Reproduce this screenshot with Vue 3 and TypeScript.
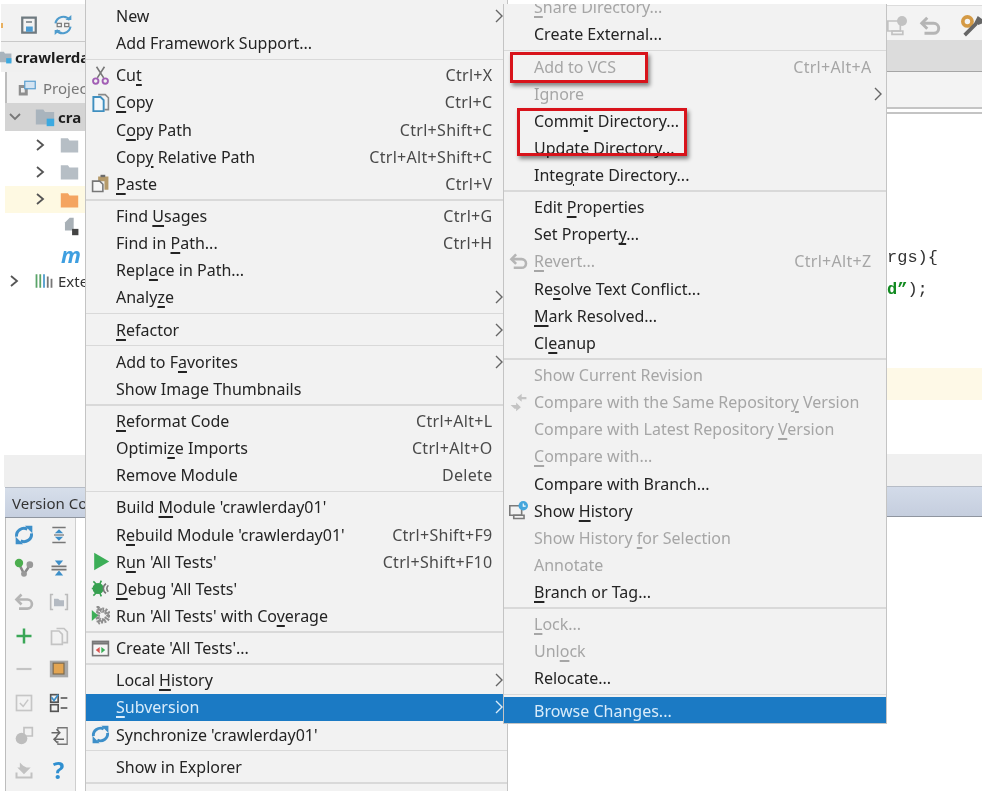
<script setup lang="ts">
interface Item { label?: string; key?: string; icon?: string; dis?: boolean; arrow?: boolean; active?: boolean; sep?: boolean }
const S: Item = { sep: true }
const menu1: Item[] = [
  { label: 'New', arrow: true }, { label: 'Add Framework Support...' }, S,
  { label: 'Cu_t', key: 'Ctrl+X', icon: 'cut' }, { label: '_Copy', key: 'Ctrl+C', icon: 'copy' },
  { label: 'C_opy Path', key: 'Ctrl+Shift+C' }, { label: 'Cop_y Relative Path', key: 'Ctrl+Alt+Shift+C' },
  { label: '_Paste', key: 'Ctrl+V', icon: 'paste' }, S,
  { label: 'Find _Usages', key: 'Ctrl+G' }, { label: 'Find in _Path...', key: 'Ctrl+H' },
  { label: 'Repl_ace in Path...' }, { label: 'Analy_ze', arrow: true }, S,
  { label: '_Refactor', arrow: true }, S,
  { label: 'Add to F_avorites', arrow: true }, { label: 'Show Image Thumbnails' }, S,
  { label: '_Reformat Code', key: 'Ctrl+Alt+L' }, { label: 'Optimi_ze Imports', key: 'Ctrl+Alt+O' },
  { label: 'Remove Module', key: 'Delete' }, S,
  { label: "Build _Module 'crawlerday01'" }, { label: "R_ebuild Module 'crawlerday01'", key: 'Ctrl+Shift+F9' },
  { label: "R_un 'All Tests'", key: 'Ctrl+Shift+F10', icon: 'run' }, { label: "_Debug 'All Tests'", icon: 'bug' },
  { label: "Run 'All Tests' with Co_verage", icon: 'cover' }, S,
  { label: "Create 'All Tests'...", icon: 'create' }, S,
  { label: 'Local _History', arrow: true }, { label: '_Subversion', arrow: true, active: true },
  { label: "Synchronize 'crawlerday01'", icon: 'sync' }, S,
  { label: 'Show in Explorer' }, S,
]
const menu2: Item[] = [
  { label: '_Share Directory...', dis: true }, { label: 'Create External...' }, S,
  { label: 'Add to VCS', key: 'Ctrl+Alt+A', dis: true }, { label: 'Ignore', dis: true, arrow: true },
  { label: 'Comm_it Directory...' }, { label: 'Update Directory...' }, { label: 'Inte_grate Directory...' }, S,
  { label: 'Edit _Properties' }, { label: 'Set Propert_y...' },
  { label: '_Revert...', key: 'Ctrl+Alt+Z', dis: true, icon: 'undo' }, { label: 'Re_solve Text Conflict...' },
  { label: '_Mark Resolved...' }, { label: 'Cl_eanup' }, S,
  { label: 'Show Current Revision', dis: true },
  { label: 'Compare with the Same Repositor_y Version', dis: true, icon: 'compare' },
  { label: 'Compare with Latest Repository _Version', dis: true }, { label: '_Compare with...', dis: true },
  { label: 'Compare with Branch...' }, { label: 'Show _History', icon: 'history' },
  { label: 'Show History _for Selection', dis: true }, { label: 'Annotate', dis: true }, { label: '_Branch or Tag...' }, S,
  { label: '_Lock...', dis: true }, { label: 'Unl_ock', dis: true }, { label: 'Relocate...' }, S,
  { label: 'Browse Changes...', active: true },
]
function parts(label = ''): [string, string, string] {
  const i = label.indexOf('_')
  return i < 0 ? [label, '', ''] : [label.slice(0, i), label[i + 1], label.slice(i + 2)]
}
const tools = ['sync', 'expand', 'branch', 'collapse', 'undo', 'bracket', 'plus', 'copygray', 'minus', 'chip', 'check', 'checklist', 'shelf', 'swap', 'down', 'help']
</script>

<template>
  <div class="page">
    <svg class="defs" aria-hidden="true">
      <symbol id="i-cut" viewBox="0 0 24 24"><path d="M8 15 17 1M16 15 7 1" fill="none" stroke="#777" stroke-width="2"/><circle cx="6" cy="19" r="3.4" fill="none" stroke="#a25fb5" stroke-width="2.4"/><circle cx="18" cy="19" r="3.4" fill="none" stroke="#a25fb5" stroke-width="2.4"/></symbol>
      <symbol id="i-copy" viewBox="0 0 24 24"><path d="M9 2h9l4 4v15h-5" fill="none" stroke="#8a8a8a" stroke-width="2"/><path d="M3 5h9l4 4v14H3z" fill="#f4f8fb" stroke="#3f8fc0" stroke-width="2.4"/></symbol>
      <symbol id="i-copygray" viewBox="0 0 24 24"><path d="M9 3h9l4 4v13h-5" fill="none" stroke="#c4c4c4" stroke-width="2"/><path d="M3 6h9l4 4v12H3z" fill="#f2f2f2" stroke="#c4c4c4" stroke-width="2"/></symbol>
      <symbol id="i-paste" viewBox="0 0 24 24"><path d="M9 3h13v17h-5V9H9z" fill="#b59a6a"/><path d="M12 1h6v3h-6z" fill="#6c6c6c"/><path d="M2 9h9l4 4v9H2z" fill="#f6f6f6" stroke="#777" stroke-width="2"/></symbol>
      <symbol id="i-run" viewBox="0 0 24 24"><path d="M4 1 23 12 4 23z" fill="#3cae57"/></symbol>
      <symbol id="i-bug" viewBox="0 0 24 24"><ellipse cx="9" cy="12" rx="7" ry="7" fill="#37a050"/><path d="M3 3 7 7M13 2l-2 5M1 12h3M3 21l4-4M13 22l-2-5" stroke="#37a050" stroke-width="2"/><path d="M19 6a7 7 0 0 0 0 12" fill="none" stroke="#777" stroke-width="2"/><path d="M22 8a5 5 0 0 0 0 8" fill="none" stroke="#777" stroke-width="2"/></symbol>
      <symbol id="i-cover" viewBox="0 0 24 24"><path d="M9 2 23 12 9 22z" fill="none" stroke="#8d8d8d" stroke-width="4" stroke-dasharray="2 1.6"/><circle cx="15" cy="12" r="7" fill="none" stroke="#8d8d8d" stroke-width="6" stroke-dasharray="2 1.5"/><path d="M1 5 9 12 1 19z" fill="#3cae57"/></symbol>
      <symbol id="i-create" viewBox="0 0 24 24"><rect x="2" y="3" width="20" height="18" fill="#f6f6f6" stroke="#777" stroke-width="2"/><path d="M2 4h20v3H2z" fill="#777"/><path d="M11 10v8l-5-4z" fill="#d9534f"/><path d="M13 10v8l5-4z" fill="#3cae57"/></symbol>
      <symbol id="i-sync" viewBox="0 0 24 24"><path d="M3 14A9 9 0 0 1 16 5M21 10A9 9 0 0 1 8 19" fill="none" stroke="#3d8fc9" stroke-width="3.6"/><path d="M13 1h9v9zM11 23H2v-9z" fill="#3d8fc9"/></symbol>
      <symbol id="i-undo" viewBox="0 0 24 24"><path d="M4 9h12a5 5 0 0 1 0 11H6" fill="none" stroke="#b5b5b5" stroke-width="3.2"/><path d="M9 3 3 9l6 6" fill="none" stroke="#b5b5b5" stroke-width="3.2"/></symbol>
      <symbol id="i-compare" viewBox="0 0 24 24"><path d="M2 15h7v-3l6 6-6 5v-3H7" fill="#c4c4c4"/><path d="M22 8h-6V4l-6 5 6 5v-3h6z" fill="#c4c4c4" transform="translate(0 -3)"/></symbol>
      <symbol id="i-history" viewBox="0 0 24 24"><path d="M1 6h15v12H1z" fill="none" stroke="#7a7a7a" stroke-width="2"/><path d="M6 18h13v4H6z" fill="none" stroke="#7a7a7a" stroke-width="2"/><circle cx="18" cy="6" r="6" fill="#44a6dc"/><path d="M18 3v3.5h3" fill="none" stroke="#fff" stroke-width="1.4"/></symbol>
      <symbol id="i-historygray" viewBox="0 0 24 24"><path d="M1 6h15v12H1z" fill="none" stroke="#c2c2c2" stroke-width="2"/><path d="M6 18h13v4H6z" fill="none" stroke="#c2c2c2" stroke-width="2"/><circle cx="18" cy="6" r="6" fill="#c2c2c2"/></symbol>
      <symbol id="i-expand" viewBox="0 0 24 24"><path d="M4 3h16M4 21h16" stroke="#777" stroke-width="2"/><path d="M12 5 7 10h10zM12 19l-5-5h10z" fill="#3d8fc9"/><path d="M6 12h12" stroke="#777" stroke-width="1.5"/></symbol>
      <symbol id="i-collapse" viewBox="0 0 24 24"><path d="M3 10h18M3 14h18" stroke="#777" stroke-width="2"/><path d="M12 9 7 3h10zM12 15l-5 6h10z" fill="#3d8fc9"/></symbol>
      <symbol id="i-branch" viewBox="0 0 24 24"><path d="M6 7l6 12 7-10" fill="none" stroke="#888" stroke-width="3"/><circle cx="6" cy="6" r="5" fill="#4cae4f"/><circle cx="19" cy="8" r="4" fill="#999"/><circle cx="12" cy="19" r="3.5" fill="#999"/></symbol>
      <symbol id="i-bracket" viewBox="0 0 24 24"><path d="M5 3H2v18h3M19 3h3v18h-3" fill="none" stroke="#bbb" stroke-width="2"/><path d="M6 8h5l2 2h5v7H6z" fill="#b4bac2"/></symbol>
      <symbol id="i-plus" viewBox="0 0 24 24"><path d="M12 3v18M3 12h18" stroke="#3aa757" stroke-width="3"/></symbol>
      <symbol id="i-minus" viewBox="0 0 24 24"><path d="M3 12h18" stroke="#c4c4c4" stroke-width="2.6"/></symbol>
      <symbol id="i-chip" viewBox="0 0 24 24"><rect x="1" y="2" width="22" height="20" fill="#a8a8a8"/><rect x="5" y="5" width="13" height="13" fill="#e3a552" stroke="#7d6a4d" stroke-width="1.4"/></symbol>
      <symbol id="i-check" viewBox="0 0 24 24"><rect x="3" y="3" width="18" height="18" fill="none" stroke="#c6c6c6" stroke-width="2"/><path d="M7 12l4 4 6-8" fill="none" stroke="#c6c6c6" stroke-width="1.8"/></symbol>
      <symbol id="i-checklist" viewBox="0 0 24 24"><rect x="2" y="2" width="9" height="9" fill="none" stroke="#555" stroke-width="2"/><path d="M3 5l3 4 5-7" fill="none" stroke="#3d8fc9" stroke-width="2"/><rect x="2" y="14" width="9" height="8" fill="none" stroke="#555" stroke-width="2"/><path d="M14 6h8M14 18h8" stroke="#777" stroke-width="2.4"/></symbol>
      <symbol id="i-shelf" viewBox="0 0 24 24"><path d="M12 2h10v10H12z" fill="none" stroke="#c2c2c2" stroke-width="2"/><circle cx="9" cy="15" r="7" fill="#bdbdbd"/></symbol>
      <symbol id="i-swap" viewBox="0 0 24 24"><path d="M7 6V2h14v20H7v-4" fill="none" stroke="#777" stroke-width="1.8" transform="matrix(.8 0 0 1 5 0)"/><path d="M3 8h10M9 4l4 4-4 4M18 16H6M10 12l-4 4 4 4" fill="none" stroke="#666" stroke-width="1.8"/></symbol>
      <symbol id="i-down" viewBox="0 0 24 24"><path d="M3 15v6h18v-6" fill="none" stroke="#c2c2c2" stroke-width="2.4"/><path d="M7 3v6h-3l8 8 8-8h-5l-4-2z" fill="#c2c2c2"/></symbol>
      <symbol id="i-project" viewBox="0 0 24 24"><rect x="1" y="8" width="12" height="14" fill="#8f8f8f"/><rect x="4" y="12" width="5" height="6" fill="#eee"/><rect x="9" y="3" width="14" height="10" fill="#d4e4f2" stroke="#5b9fd0" stroke-width="1.6"/></symbol>
      <symbol id="i-folder" viewBox="0 0 24 24"><path d="M1 4h9l2 3h11v15H1z" fill="currentColor"/></symbol>
      <symbol id="i-module" viewBox="0 0 24 24"><path d="M1 3h9l2 3h11v15H1z" fill="#a9b4bd"/><rect x="14" y="14" width="9" height="9" fill="#3ba9e0"/></symbol>
      <symbol id="i-save" viewBox="0 0 24 24"><path d="M3 2h18v20H3z" fill="none" stroke="#6f7a80" stroke-width="3"/><rect x="8" y="14" width="9" height="7" fill="#4b9bd1"/><path d="M8 8h8" stroke="#6f7a80" stroke-width="2"/></symbol>
      <symbol id="i-reload" viewBox="0 0 24 24"><path d="M3 10A9.5 9.5 0 0 1 20 6M21 14A9.5 9.5 0 0 1 4 18" fill="none" stroke="#4f9ccd" stroke-width="2.6"/><path d="M15 6h7V0zM9 18H2v6z" fill="#4f9ccd"/><rect x="5" y="10" width="5" height="4" fill="none" stroke="#777" stroke-width="1.4"/><rect x="14" y="10" width="5" height="4" fill="none" stroke="#777" stroke-width="1.4"/></symbol>
      <symbol id="i-file" viewBox="0 0 24 24"><path d="M5 7l6-6h5v16H5z" fill="#a8b0b6"/><rect x="14" y="15" width="8" height="8" fill="#444"/></symbol>
      <symbol id="i-libs" viewBox="0 0 24 24"><path d="M2 3v18M7 3v18" stroke="#5aa469" stroke-width="2.4"/><path d="M12 3v18" stroke="#4f9ccd" stroke-width="2.4"/><path d="M17 6v15M22 9v12" stroke="#777" stroke-width="2.4"/></symbol>
      <symbol id="i-wrench" viewBox="0 0 24 24"><circle cx="7" cy="7" r="5" fill="none" stroke="#d49a45" stroke-width="4"/><path d="M4 22 16 10l3-6 4 3-5 2" fill="none" stroke="#666" stroke-width="4"/></symbol>
    </svg>

    <aside class="left">
      <div class="ltool">
        <span class="speck"></span>
        <svg class="ic18 save"><use href="#i-save" /></svg>
        <svg class="ic20"><use href="#i-reload" /></svg>
      </div>
      <div class="lnav"><svg class="ic14"><use href="#i-module" /></svg><b>crawlerda</b></div>
      <div class="ltabs"><svg class="ic18"><use href="#i-project" /></svg><span>Projec</span></div>
      <div class="tree">
        <div class="thead"><svg class="chev"><path d="M1 3l5 5 5-5" /></svg><svg class="ic20"><use href="#i-module" /></svg><b>cra</b></div>
        <div class="trow"><svg class="chev r"><path d="M2 1l6 5-6 5" /></svg><svg class="ic19 gray"><use href="#i-folder" /></svg></div>
        <div class="trow"><svg class="chev r"><path d="M2 1l6 5-6 5" /></svg><svg class="ic19 gray"><use href="#i-folder" /></svg></div>
        <div class="trow sel"><svg class="chev r"><path d="M2 1l6 5-6 5" /></svg><svg class="ic19 orange"><use href="#i-folder" /></svg></div>
        <div class="trow leaf"><svg class="ic19"><use href="#i-file" /></svg></div>
        <div class="trow leaf"><i class="mvn">m</i></div>
        <div class="trow ext"><svg class="chev r"><path d="M2 1l6 5-6 5" /></svg><svg class="ic18"><use href="#i-libs" /></svg><span>Exte</span></div>
      </div>
      <div class="lband"></div>
      <div class="lhead">Version Co</div>
      <div class="ltools">
        <div v-for="t in tools" :key="t" class="tcell">
          <span v-if="t === 'help'" class="help">?</span>
          <svg v-else class="ic20"><use :href="'#i-' + t" /></svg>
        </div>
      </div>
    </aside>

    <nav class="menu one">
      <template v-for="(it, i) in menu1" :key="i">
        <div v-if="it.sep" class="sep"></div>
        <div v-else class="row" :class="{ dis: it.dis, active: it.active }">
          <svg v-if="it.icon" class="micon"><use :href="'#i-' + it.icon" /></svg>
          <span>{{ parts(it.label)[0] }}<u>{{ parts(it.label)[1] }}</u>{{ parts(it.label)[2] }}</span>
          <span v-if="it.key" class="key">{{ it.key }}</span>
          <svg v-if="it.arrow" class="arrow"><path d="M1 1l6 6-6 6" /></svg>
        </div>
      </template>
    </nav>

    <main class="right">
      <div class="rtool">
        <svg class="ic20"><use href="#i-historygray" /></svg>
        <svg class="ic22"><use href="#i-undo" /></svg>
        <span class="vbar"></span>
        <svg class="ic22"><use href="#i-wrench" /></svg>
      </div>
      <div class="rnav"></div>
      <div class="rtabs"></div>
      <div class="editor">
        <div class="code">rgs){</div>
        <div class="code"><b>d”</b>);</div>
        <div class="yellow"></div>
      </div>
      <div class="rband"></div>
      <div class="rhead"></div>
    </main>

    <nav class="menu two">
      <template v-for="(it, i) in menu2" :key="i">
        <div v-if="it.sep" class="sep"></div>
        <div v-else class="row" :class="{ dis: it.dis, active: it.active }">
          <svg v-if="it.icon" class="micon"><use :href="'#i-' + it.icon" /></svg>
          <span>{{ parts(it.label)[0] }}<u>{{ parts(it.label)[1] }}</u>{{ parts(it.label)[2] }}</span>
          <span v-if="it.key" class="key">{{ it.key }}</span>
          <svg v-if="it.arrow" class="arrow"><path d="M1 1l6 6-6 6" /></svg>
        </div>
      </template>
    </nav>

    <div class="mark m1"></div>
    <div class="mark m2"></div>
  </div>
</template>

<style scoped>
.page { position: relative; display: flex; width: 982px; height: 791px; overflow: hidden; background: #fff; font-family: "Noto Sans", "Open Sans", sans-serif; color: #222; filter: blur(0.45px); }
.defs { position: absolute; width: 0; height: 0; }
.ic14 { width: 14px; height: 14px; flex: none; }
.ic18 { width: 18px; height: 18px; flex: none; }
.ic19 { width: 19px; height: 19px; flex: none; }
.ic20 { width: 20px; height: 20px; flex: none; }
.ic22 { width: 22px; height: 22px; flex: none; }
.gray { color: #b6bec5; }
.orange { color: #f4a460; }

.left { width: 85px; flex: none; padding-top: 4px; box-sizing: border-box; display: flex; flex-direction: column; overflow: hidden; white-space: nowrap; }
.ltool { height: 37px; background: #f2f2f2; display: flex; align-items: center; position: relative; margin-left: 1px; flex: none; padding-top: 5px; box-sizing: border-box; }
.speck { position: absolute; left: 0; top: 19px; width: 2px; height: 5px; background: #e8b060; }
.save { margin-left: 19px; margin-right: 15px; }
.lnav { height: 31px; flex: none; background: #f0f0f0; border-top: 1px solid #c9c9c9; box-sizing: border-box; display: flex; align-items: center; gap: 3px; margin-left: 1px; font-size: 15px; color: #1e1e1e; }
.lnav svg { margin-left: -3px; }
.ltabs { height: 31px; flex: none; margin-left: 5px; background: #f1f1f1; border-left: 2px solid #bdbdbd; display: flex; align-items: center; padding-left: 11px; gap: 7px; font-size: 15px; color: #777; }
.tree { height: 352px; flex: none; margin-left: 5px; font-size: 15px; }
.thead { height: 28px; background: #d4d4d4; display: flex; align-items: center; padding-left: 4px; color: #1e1e1e; }
.thead .chev { margin-right: 14px; }
.thead b { margin-left: 3px; }
.chev { width: 12px; height: 12px; flex: none; fill: none; stroke: #777; stroke-width: 1.8; }
.chev.r { stroke: #555; }
.trow { height: 27.3px; display: flex; align-items: center; padding-left: 30px; gap: 13px; }
.trow.sel { background: #fef9e2; }
.trow.leaf { padding-left: 56px; }
.trow.ext { padding-left: 4px; gap: 14px; color: #333; }
.trow.ext span { margin-left: -9px; }
.mvn { font: italic bold 22px "Noto Sans", sans-serif; color: #3f9fe0; line-height: 1; }
.lband { height: 32px; flex: none; background: #efefef; margin-left: 4px; }
.lhead { height: 31px; flex: none; margin-left: 5px; padding-left: 7px; display: flex; align-items: center; font-size: 15px; color: #333; background: linear-gradient(#d6deea, #c7d0e0); border-top: 1px solid #b6bcc6; border-bottom: 1px solid #8f959f; box-sizing: border-box; }
.ltools { flex: 1; margin-left: 5px; width: 71px; display: grid; grid-template-columns: 35px 35px; grid-auto-rows: 33.6px; border-left: 1.5px solid #bdbdbd; border-right: 1.5px solid #cfcfcf; box-sizing: border-box; background: #f2f2f2; align-content: start; }
.tcell { display: flex; align-items: center; justify-content: center; }
.help { font: bold 24px "Noto Sans", sans-serif; color: #2f8fd0; line-height: 1; }

.menu { background: #f2f2f2; box-sizing: border-box; font-size: 16px; white-space: nowrap; }
.one { width: 423px; flex: none; border-left: 1.5px solid #c4c4c4; border-right: 1.5px solid #c4c4c4; padding-top: 2.5px; height: 791px; overflow: hidden; }
.two { position: absolute; left: 503px; top: 4px; width: 384px; height: 720px; overflow: hidden; border: 1.5px solid #c4c4c4; border-top: 0; }
.two .row:first-child { margin-top: -10.5px; }
.two .sep { height: 5.3px; }
.row { height: 27.1px; display: flex; align-items: center; padding: 0 14.5px 0 30px; position: relative; color: #242424; }
.row u { text-decoration-thickness: 1.5px; text-underline-offset: 3px; }
.row.dis { color: #a6a6a6; }
.row.active { background: #1b7ac4; color: #d9ecfa; }
.key { margin-left: auto; color: #4a4a4a; letter-spacing: .3px; }
.dis .key { color: #a6a6a6; }
.sep { height: 5.15px; display: flex; align-items: center; }
.sep::after { content: ""; display: block; width: 100%; height: 1.5px; background: #d9d9d9; }
.micon { position: absolute; left: 4.5px; top: 4px; width: 19px; height: 19px; }
.arrow { width: 8px; height: 14px; margin-left: auto; margin-right: -10px; fill: none; stroke: #666; stroke-width: 1.4; flex: none; }
.key + .arrow { margin-left: 2px; }
.active .arrow { stroke: #d9ecfa; }

.right { flex: 1; display: flex; flex-direction: column; min-width: 0; padding-top: 5px; padding-bottom: 0; overflow: hidden; }
.rtool { height: 35px; flex: none; border-top: 1.5px solid #dcdcdc; background: #f3f3f3; display: flex; align-items: center; padding: 5px 0 0 379px; box-sizing: border-box; }
.rtool svg:nth-child(2) { margin-left: 12px; }
.vbar { width: 1px; height: 26px; background: #d0d0d0; margin: 0 9px 0 11px; }
.rnav { height: 32px; flex: none; background: #dcdcdc; border-bottom: 1.5px solid #a5a5a5; box-sizing: border-box; }
.rtabs { height: 37px; flex: none; background: #f3f3f3; box-sizing: border-box; border-bottom: 2px solid #c4c4c4; position: relative; }
.rtabs::after { content: ""; position: absolute; left: 0; right: 0; bottom: -7px; height: 2px; background: #c4c4c4; }
.editor { height: 345px; flex: none; padding-left: 379px; padding-top: 133px; box-sizing: border-box; position: relative; }
.code { height: 32px; font: 17px/32px "Liberation Mono", monospace; color: #333; white-space: nowrap; }
.code b { color: #118a20; }
.yellow { margin: 62px 0 0 -379px; height: 32px; background: #fef9e7; }
.rband { height: 32px; flex: none; background: #f0f0f0; }
.rhead { height: 31px; flex: none; background: linear-gradient(#d3dbe9, #c5cede); border-top: 1.5px solid #b6bcc6; border-bottom: 1.5px solid #8f959f; box-sizing: border-box; }

.mark { position: absolute; border: 3px solid #d8131b; box-shadow: 2px 3px 4px rgba(0, 0, 0, .45); box-sizing: border-box; }
.m1 { left: 510px; top: 52px; width: 138px; height: 31px; }
.m2 { left: 517px; top: 108px; width: 170px; height: 48px; }
</style>
